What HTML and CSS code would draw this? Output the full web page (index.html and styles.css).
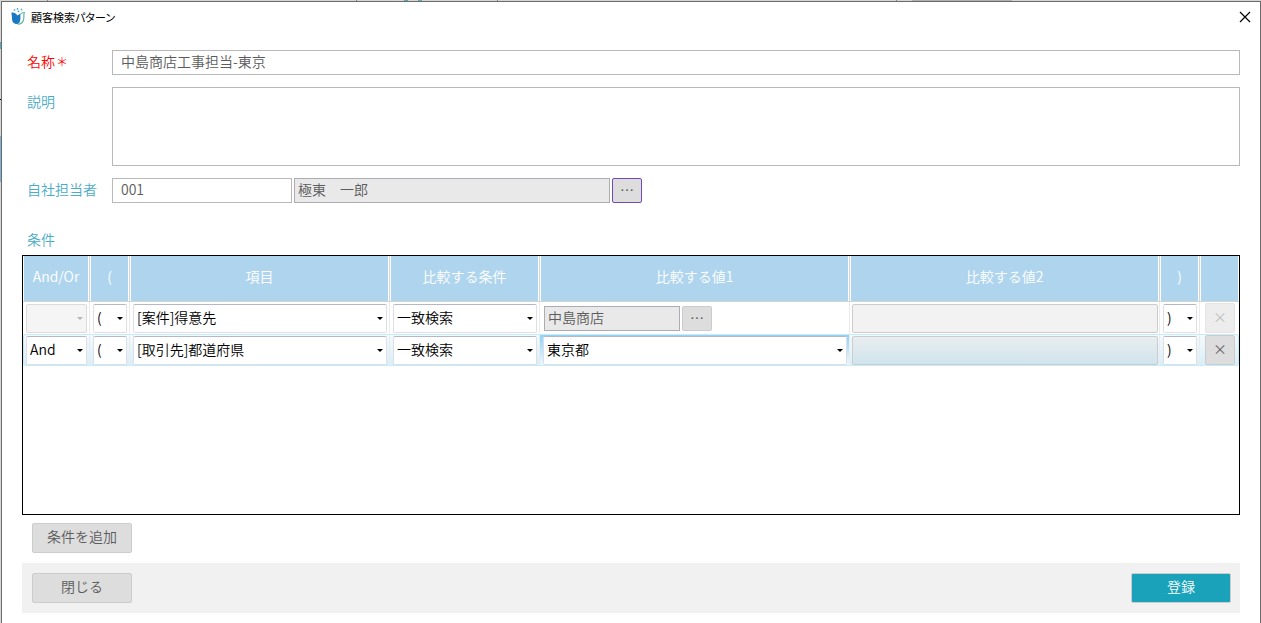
FILE: index.html
```html
<!DOCTYPE html>
<html lang="ja">
<head>
  <meta charset="UTF-8" />
  <meta name="viewport" content="width=device-width, initial-scale=1.0" />
  <title>顧客検索パターン</title>
  <link rel="stylesheet" href="styles.css">
</head>
<body>
  <div class="dialog">
    <header class="titlebar">
      <svg class="logo" width="14" height="17" viewBox="0 0 14 17" aria-hidden="true">
        <path d="M0.500 4.500 C3 4 5.500 5.500 6.500 7.500 C7.500 6.500 9 5.800 9.500 6 C9 8 10 10 9 13 C8.500 15 7.500 16 6 16 C2.500 16 1 13.500 1 10.500 C1 8 0.500 6.500 0.500 4.500Z" fill="#1878c4"/>
        <path d="M9.500 6 C10.500 5 12 4.500 13.300 4.500 C12.300 7 13.500 9.500 12.300 12.500 C11.500 14.800 9 16.200 6.500 16" fill="none" stroke="#5fb8a0" stroke-width="1.200"/>
        <circle cx="3.500" cy="1.900" r="0.900" fill="#5ab4dc"/>
        <circle cx="6.500" cy="0.900" r="0.800" fill="#3c96d2"/>
        <circle cx="10.500" cy="1.500" r="0.900" fill="#5ab4dc"/>
        <circle cx="7.500" cy="3.400" r="0.800" fill="#3c96d2"/>
      </svg>
      <h1>顧客検索パターン</h1>
      <button type="button" class="close" aria-label="ウィンドウを閉じる">
        <svg width="12" height="12" viewBox="0 0 12 12"><path d="M1 1 L11 11 M11 1 L1 11" stroke="#000" stroke-width="1.200"/></svg>
      </button>
    </header>

    <form class="content">
      <div class="field">
        <label class="required" for="name">名称<span class="mark">＊</span></label>
        <input class="box" type="text" id="name" value="中島商店工事担当-東京">
      </div>
      <div class="field multiline">
        <label for="description">説明</label>
        <textarea class="box" id="description"></textarea>
      </div>
      <div class="field">
        <label for="staff">自社担当者</label>
        <div class="lookup">
          <input class="box code" type="text" id="staff" value="001">
          <input class="box readonly staff-name" type="text" value="極東　一郎" aria-label="自社担当者名" readonly>
          <button type="button" class="btn more focused" aria-label="担当者を選択">…</button>
        </div>
      </div>

      <h2 id="conditions">条件</h2>
      <div class="grid">
        <table aria-labelledby="conditions">
          <colgroup>
            <col class="c-andor">
            <col class="c-paren">
            <col class="c-item">
            <col class="c-cond">
            <col class="c-value">
            <col>
            <col class="c-paren">
            <col class="c-delete">
          </colgroup>
          <thead>
            <tr>
              <th>And/Or</th>
              <th>(</th>
              <th>項目</th>
              <th>比較する条件</th>
              <th>比較する値1</th>
              <th>比較する値2</th>
              <th>)</th>
              <th></th>
            </tr>
          </thead>
          <tbody>
            <tr>
              <td><div class="select disabled"><select aria-label="And/Or" disabled><option></option></select></div></td>
              <td><div class="select"><select aria-label="開き括弧"><option>(</option></select></div></td>
              <td><div class="select"><select aria-label="項目"><option>[案件]得意先</option></select></div></td>
              <td><div class="select"><select aria-label="比較する条件"><option>一致検索</option></select></div></td>
              <td class="lookup-cell">
                <div class="lookup">
                  <input class="box readonly customer" type="text" value="中島商店" aria-label="比較する値1" readonly>
                  <button type="button" class="btn more" aria-label="得意先を選択">…</button>
                </div>
              </td>
              <td class="value2-cell"><input class="value2" type="text" aria-label="比較する値2" disabled></td>
              <td><div class="select"><select aria-label="閉じ括弧"><option>)</option></select></div></td>
              <td><button type="button" class="btn delete" aria-label="行を削除" disabled>×</button></td>
            </tr>
            <tr class="selected">
              <td><div class="select"><select aria-label="And/Or"><option>And</option><option>Or</option></select></div></td>
              <td><div class="select"><select aria-label="開き括弧"><option>(</option></select></div></td>
              <td><div class="select"><select aria-label="項目"><option>[取引先]都道府県</option></select></div></td>
              <td><div class="select"><select aria-label="比較する条件"><option>一致検索</option></select></div></td>
              <td class="current"><div class="select"><select aria-label="比較する値1"><option>東京都</option></select></div></td>
              <td class="value2-cell"><input class="value2" type="text" aria-label="比較する値2" disabled></td>
              <td><div class="select"><select aria-label="閉じ括弧"><option>)</option></select></div></td>
              <td><button type="button" class="btn delete" aria-label="行を削除">×</button></td>
            </tr>
          </tbody>
        </table>
      </div>
      <div class="tools">
        <button type="button" class="btn wide">条件を追加</button>
      </div>
      <footer class="actions">
        <button type="button" class="btn wide">閉じる</button>
        <button type="submit" class="btn wide primary">登録</button>
      </footer>
    </form>
  </div>
</body>
</html>
```

FILE: styles.css
```css
* {
  box-sizing: border-box;
}
body {
  margin: 0;
  padding: 1px 0 0 1px;
  /* slivers of the parent window behind the dialog */
  background:
    linear-gradient(#5aa9bf, #5aa9bf) 404px 0 / 4px 1px no-repeat,
    linear-gradient(#5aa9bf, #5aa9bf) 418px 0 / 4px 1px no-repeat,
    linear-gradient(#888, #888) 47px 0 / 1px 1px no-repeat,
    linear-gradient(#888, #888) 356px 0 / 1px 1px no-repeat,
    linear-gradient(#888, #888) 497px 0 / 1px 1px no-repeat,
    linear-gradient(#888, #888) 896px 0 / 1px 1px no-repeat,
    linear-gradient(#b0b0b0, #b0b0b0) 912px 0 / 100px 1px no-repeat,
    linear-gradient(#5aa9bf, #5aa9bf) 0 42px / 1px 7px no-repeat,
    linear-gradient(#000, #000) 0 99px / 1px 1px no-repeat,
    linear-gradient(#7fb0d6, #7fb0d6) 0 136px / 1px 46px no-repeat,
    #d6d6d6;
  font-family: "Noto Sans CJK JP", "Liberation Sans", sans-serif;
  font-size: 14px;
  font-weight: 350;
  line-height: 20px;
  color: #5c5c5c;
}
input,
select,
textarea,
button {
  margin: 0;
  font: inherit;
  color: inherit;
}
.dialog {
  min-height: calc(100vh - 1px);
  background: #fff;
  border: 1px solid #6b6b6b;
  border-bottom: 0;
}
.titlebar {
  display: flex;
  align-items: center;
  height: 29px;
  padding: 0 9px;
}
h1 {
  flex: 1;
  margin: 0 0 0 6px;
  font-size: 11px;
  font-weight: 400;
  font-feature-settings: "palt";
  color: #000;
}
.close {
  display: flex;
  padding: 0;
  border: 0;
  background: none;
}
.content {
  padding: 19px 20px 10px;
}
.field {
  display: flex;
  margin-bottom: 12px;
}
.field label {
  flex: none;
  width: 90px;
  padding: 1px 0 0 5px;
  color: #4bacc6;
}
.multiline label {
  padding-top: 4px;
}
.field .required {
  color: #f00;
}
.mark {
  margin-left: 1px;
  font-size: 12px;
}
.box {
  flex: 1;
  min-width: 0;
  height: 25px;
  padding: 0 8px 3px;
  border: 1px solid #b9b9b9;
  border-radius: 0;
  background: #fff;
}
textarea.box {
  height: 79px;
  resize: none;
}
.lookup {
  display: flex;
  gap: 2px;
}
.code {
  flex: none;
  width: 180px;
}
.readonly {
  flex: none;
  padding: 0 3px 3px;
  border-color: #abadb3;
  background: #e9e9e9;
}
.staff-name {
  width: 316px;
}
.customer {
  width: 136px;
}
.btn {
  padding: 0 0 4px;
  border: 1px solid #ccc;
  border-radius: 2px;
  background: #ddd;
}
.more {
  width: 30px;
  height: 25px;
}
.focused {
  border-color: #7548b8;
}
h2 {
  margin: 26px 0 6px 5px;
  font-size: 14px;
  font-weight: 350;
  line-height: 20px;
  color: #4bacc6;
}
.grid {
  height: 260px;
  border: 1px solid #000;
}
table {
  width: 100%;
  table-layout: fixed;
  border-collapse: separate;
  border-spacing: 0;
}
.c-andor { width: 67px; }
.c-paren { width: 40px; }
.c-item { width: 260px; }
.c-cond { width: 150px; }
.c-value { width: 310px; }
.c-delete { width: 39px; }
th {
  height: 46px;
  padding: 0 0 6px;
  border: solid #d4d4d4;
  border-width: 0 1px 1px 0;
  background: #afd5ee;
  box-shadow: inset 1px 0 #fff, inset -1px 0 #fff;
  font-weight: 350;
  color: #fff;
}
th:last-child {
  border-right: 0;
}
td {
  height: 32px;
  padding: 1px 2px 0 3px;
  border-right: 1px solid #ebebeb;
  vertical-align: middle;
}
.lookup-cell {
  padding-left: 4px;
}
.value2-cell {
  padding: 1px 1px 0 2px;
}
td:last-child {
  padding: 0 0 0 5px;
  border-right: 0;
}
.selected td {
  padding-top: 0;
  border-top: 1px solid #c6ebfb;
  border-bottom: 1px solid #c6ebfb;
  background: linear-gradient(#f4fafd, #d9eef7);
}
.selected td:first-child {
  border-left: 1px solid #c6ebfb;
  border-radius: 3px 0 0 3px;
  padding-left: 2px;
}
.selected td:last-child {
  border-right: 1px solid #c6ebfb;
  border-radius: 0 3px 3px 0;
}
.selected .current {
  background: linear-gradient(#8fd3f7, #eef8fd);
}
.select {
  position: relative;
}
.select::after {
  content: "";
  position: absolute;
  top: 13px;
  right: 4px;
  border: solid transparent;
  border-width: 3px 3px 0;
  border-top-color: #000;
  pointer-events: none;
}
.disabled::after {
  border-top-color: #b5b5b5;
}
select {
  display: block;
  width: 100%;
  height: 29px;
  padding: 0 14px 3px 3px;
  border: 1px solid #dcdfe8;
  border-top-color: #b5b8c4;
  border-radius: 2px;
  background: #fff;
  color: #000;
  appearance: none;
}
select:disabled {
  border-color: #ccc;
  background: #f2f2f2;
}
.value2 {
  display: block;
  width: 100%;
  height: 29px;
  border: 1px solid #ccc;
  border-radius: 2px;
  background: #f2f2f2;
}
.selected .value2 {
  background: linear-gradient(#e8edf0, #d1e4ec);
}
.delete {
  display: block;
  width: 30px;
  height: 30px;
}
.delete:disabled {
  border-color: #e4e4e4;
  background: #ededed;
  color: #bbb;
}
.tools {
  padding: 8px 10px 10px;
}
.wide {
  display: block;
  width: 100px;
  height: 30px;
}
.actions {
  display: flex;
  justify-content: space-between;
  padding: 10px 9px 10px 10px;
  background: #f1f1f1;
}
.primary {
  background: #19a2b9;
  color: #fff;
}
```
